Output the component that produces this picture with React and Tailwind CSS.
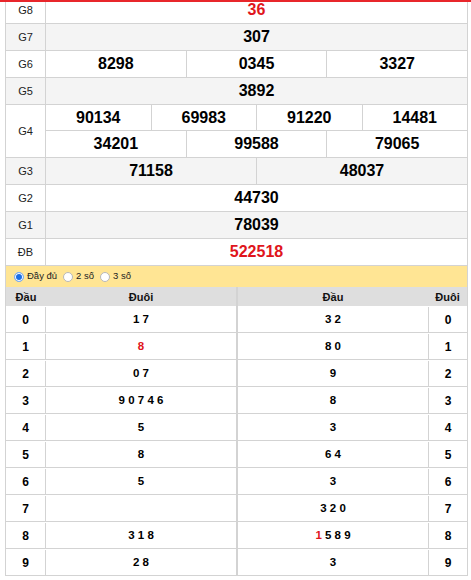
import React from "react";

const B = "border-[#d3d3d3]";

function Cell({ children, first, red }) {
  return (
    <div
      className={`flex-1 flex items-center justify-center ${first ? "" : "border-l " + B} ${
        red ? "text-[#e0151b]" : "text-black"
      } font-bold text-[16px]`}
    >
      {children}
    </div>
  );
}

function Row({ label, bg, h = "h-[26px]", labelPad = "", cells, red }) {
  return (
    <div className={`flex border-b ${B} ${bg}`}>
      <div className={`w-[40px] ${h} ${labelPad} border-r ${B} flex items-center justify-center text-[11px] text-[#222]`}>
        {label}
      </div>
      <div className={`flex-1 flex ${h} ${labelPad}`}>
        {cells.map((c, i) => (
          <Cell key={i} first={i === 0} red={red}>
            {c}
          </Cell>
        ))}
      </div>
    </div>
  );
}

const left = [
  ["1 7"],
  [<span className="text-[#e0151b]">8</span>],
  ["0 7"],
  ["9 0 7 4 6"],
  ["5"],
  ["8"],
  ["5"],
  [""],
  ["3 1 8"],
  ["2 8"],
];
const right = [
  "3 2",
  "8 0",
  "9",
  "8",
  "3",
  "6 4",
  "3",
  "3 2 0",
  <span>
    <span className="text-[#e0151b]">1</span> 5 8 9
  </span>,
  "3",
];

function Radio({ checked, label }) {
  return (
    <div className="flex items-center gap-[3px]">
      {checked ? (
        <span className="w-[10px] h-[10px] rounded-full bg-[#1b6fe6] border border-[#7fb0f5] shadow-[inset_0_0_0_1px_#ffffff]" />
      ) : (
        <span className="w-[10px] h-[10px] rounded-full bg-white border border-[#b8b8b8]" />
      )}
      <span className="text-[9.5px] text-[#222]">{label}</span>
    </div>
  );
}

export default function App() {
  return (
    <div className="w-[471px] h-[580px] bg-white overflow-hidden font-['Liberation_Sans',Arial,sans-serif]">
      <div className="h-[2px] bg-[#e8262b]" />
      <div className={`ml-[5px] w-[463px] border-l border-r ${B}`}>
        <Row label="G8" bg="bg-white" h="h-[21px]" labelPad="pb-[5px]" cells={["36"]} red />
        <Row label="G7" bg="bg-[#f4f4f4]" cells={["307"]} />
        <Row label="G6" bg="bg-white" cells={["8298", "0345", "3327"]} />
        <Row label="G5" bg="bg-[#f4f4f4]" cells={["3892"]} />
        <div className={`flex border-b ${B} bg-white`}>
          <div className={`w-[40px] border-r ${B} flex items-center justify-center text-[11px] text-[#222]`}>G4</div>
          <div className="flex-1 flex flex-col">
            <div className={`flex h-[26px] border-b ${B}`}>
              {["90134", "69983", "91220", "14481"].map((c, i) => (
                <Cell key={i} first={i === 0}>
                  {c}
                </Cell>
              ))}
            </div>
            <div className="flex h-[26px]">
              {["34201", "99588", "79065"].map((c, i) => (
                <Cell key={i} first={i === 0}>
                  {c}
                </Cell>
              ))}
            </div>
          </div>
        </div>
        <Row label="G3" bg="bg-[#f4f4f4]" cells={["71158", "48037"]} />
        <Row label="G2" bg="bg-white" cells={["44730"]} />
        <Row label="G1" bg="bg-[#f4f4f4]" cells={["78039"]} />
        <Row label="ĐB" bg="bg-white" cells={["522518"]} red />
        <div className="h-[21px] bg-[#ffe594] flex items-center pl-[8px] gap-[6px]">
          <Radio checked label="Đầy đủ" />
          <Radio label="2 số" />
          <Radio label="3 số" />
        </div>
      </div>
      <div className="ml-[5px] w-[463px] flex">
        <div className={`w-[232px] border-l border-r ${B}`}>
          <div className="flex h-[19px] pt-[1px] bg-[#dedede] text-[11px] font-bold text-[#111]">
            <div className="w-[40px] flex items-center justify-center">Đầu</div>
            <div className="flex-1 flex items-center justify-center">Đuôi</div>
          </div>
          {left.map((r, i) => (
            <div key={i} className={`flex h-[27px] pt-[1px] border-b ${B} bg-white`}>
              <div className={`w-[40px] border-r ${B} flex items-center justify-center text-[12px] font-bold`}>{i}</div>
              <div className="flex-1 flex items-center justify-center text-[11.5px] font-bold">{r[0]}</div>
            </div>
          ))}
        </div>
        <div className={`w-[231px] border-l border-r ${B}`}>
          <div className="flex h-[19px] pt-[1px] bg-[#dedede] text-[11px] font-bold text-[#111]">
            <div className="flex-1 flex items-center justify-center">Đầu</div>
            <div className="w-[39px] flex items-center justify-center">Đuôi</div>
          </div>
          {right.map((r, i) => (
            <div key={i} className={`flex h-[27px] pt-[1px] border-b ${B} bg-white`}>
              <div className="flex-1 flex items-center justify-center text-[11.5px] font-bold">{r}</div>
              <div className={`w-[39px] border-l ${B} flex items-center justify-center text-[12px] font-bold`}>{i}</div>
            </div>
          ))}
        </div>
      </div>
    </div>
  );
}
